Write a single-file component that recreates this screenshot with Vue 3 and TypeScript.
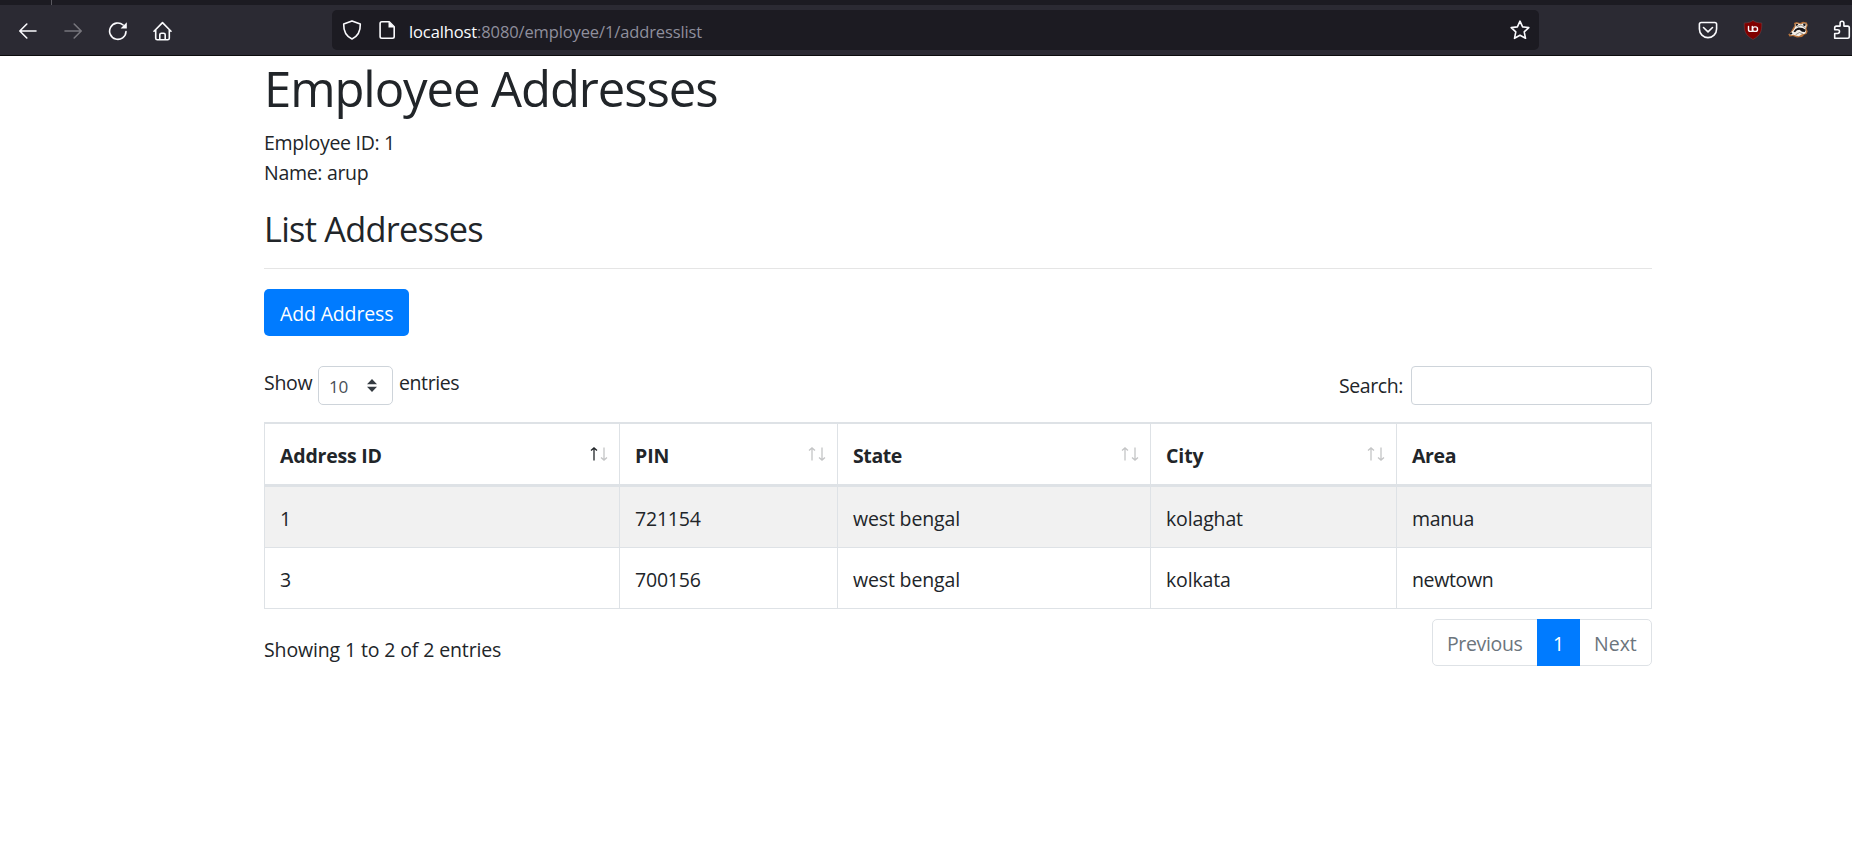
<script setup lang="ts">
interface Column {
  key: keyof Address
  label: string
  sort: 'asc' | 'none' | null
}

interface Address {
  id: number
  pin: string
  state: string
  city: string
  area: string
}

const columns: Column[] = [
  { key: 'id', label: 'Address ID', sort: 'asc' },
  { key: 'pin', label: 'PIN', sort: 'none' },
  { key: 'state', label: 'State', sort: 'none' },
  { key: 'city', label: 'City', sort: 'none' },
  { key: 'area', label: 'Area', sort: null },
]

const rows: Address[] = [
  { id: 1, pin: '721154', state: 'west bengal', city: 'kolaghat', area: 'manua' },
  { id: 3, pin: '700156', state: 'west bengal', city: 'kolkata', area: 'newtown' },
]
</script>

<template>
  <div class="window">
    <div class="tabstrip"><i class="tab-separator"></i></div>
    <header class="toolbar">
      <nav class="nav-buttons">
        <svg viewBox="0 0 20 20"><path d="M18 10H2M8.800 3 1.800 10l7 7" /></svg>
        <svg class="dim" viewBox="0 0 20 20"><path d="M2 10h16M11.200 3l7 7-7 7" /></svg>
        <svg viewBox="0 0 20 20"><path d="M18 10.500A8.200 8.200 0 1 1 15.200 4" /><path class="solid" d="M18.800 1.200v6.200h-6.200z" /></svg>
        <svg viewBox="0 0 20 20"><path d="M1 10.200 9.500 1.600l8.500 8.600M2.700 8.800v8.400q0 1.600 1.600 1.600h10.400q1.600 0 1.600-1.600V8.800M6.800 18.800v-5q0-1.600 1.600-1.600h2.200q1.600 0 1.600 1.600v5" /></svg>
      </nav>
      <div class="urlbar">
        <svg viewBox="0 0 20 20"><path d="M10 .900 18.300 4c.2 6.800-2 12.100-8.300 15C3.700 16.100 1.500 10.800 1.700 4z" /></svg>
        <svg class="page-icon" viewBox="0 0 20 20"><path d="M4.800 1.800h7.400l5 5v9.800q0 1.700-1.700 1.700H4.800q-1.700 0-1.700-1.700V3.500q0-1.700 1.700-1.700z" /><path class="solid" d="M11.500 1.500v6h6z" /></svg>
        <span class="url"><b>localhost</b><span class="path">:8080/employee/1/addresslist</span></span>
        <svg class="star" viewBox="0 0 20 20"><path d="m10 1.200 2.600 5.700 6.200.7-4.600 4.200 1.300 6.500L10 15.200l-5.500 3.100 1.300-6.500L1.200 7.600l6.200-.7z" /></svg>
      </div>
      <div class="extensions">
        <svg viewBox="0 0 20 20"><path d="M3.200 2.500h13.600q1.800 0 1.800 1.800V9a8.600 8.600 0 0 1-17.200 0V4.300q0-1.800 1.800-1.800z" /><path d="m5.500 7.500 4.500 4.300 4.500-4.300" /></svg>
        <svg viewBox="0 0 20 20"><path class="ublock" d="M10 .5C7.600 2.300 4.800 3 1.200 3c0 8.500.8 11.800 8.800 16.500C18 14.800 18.800 11.500 18.800 3 15.200 3 12.400 2.300 10 .5z" /><path class="ublock-mark" d="M5.500 6.500v3q0 1.900 1.900 1.900h1.900V6.500" /><rect class="ublock-mark" x="9.700" y="6.900" width="4.800" height="4.500" rx="2" /></svg>
        <svg viewBox="0 0 20 20">
          <path class="fur" d="M.3 14.200 2.500 12.500 5 8l1.500-2.500L6 3l2.500-1L12 3l3-1.200 3.800.7 1 2.500-1.300 3.500 1.200 3-1.200 2.500-2 .5-2.500 2.500-5 .500-4-1.500-3.500.5z" />
          <path class="fur-white" d="M1.500 14 5.500 10 7.700 6l-.5-2 2.500-.5 3 .7 3-1 2.500.500.3 2-1.200 3 .8 3-1.200 2-3 .5-3 2-3.500-.7-2-.8-2 .5z" />
          <path class="fur-black" d="m1 13.700 2.500-1.500 1 1.300-1.500 1.300zM5.500 11.500l2-2.500 3-1.500 4 .5 3.200 1.700-.7 2.300-3-.2-2.500-2-2.500.5-2 2zM7.500 4.200l2-.5.8 1-2 1.200zM15.200 3.500l2.500.3-.5 2.400-2-.8z" />
          <path class="fur-line" d="M9 6.500l4-1.500 4 2.500M8 14.500l3.500-2 3 1.200" />
        </svg>
        <svg viewBox="0 0 20 20"><path d="M1.700 18.300v-4.800h2.800q2 0 2-1.900t-2-1.900H1.700V7.800q0-1.700 1.700-1.700h3.700V3.300q0-2 1.900-2t1.900 2v2.800h3.700q1.700 0 1.700 1.700v8.800q0 1.700-1.700 1.700z" /></svg>
      </div>
    </header>

    <main class="container">
      <h1>Employee Addresses</h1>
      <p>Employee ID: 1</p>
      <p>Name: arup</p>
      <h3>List Addresses</h3>
      <hr />
      <button class="add" type="button">Add Address</button>

      <div class="controls">
        <div class="length">
          <span class="show">Show</span>
          <span class="select">
            <span class="value">10</span>
            <svg viewBox="0 0 10 13"><path d="M5 0l5 5.200H0zM5 13l5-5.200H0z" /></svg>
          </span>
          <span class="entries">entries</span>
        </div>
        <label class="filter"><span>Search:</span><input type="text" /></label>
      </div>

      <table>
        <colgroup><col v-for="c in columns" :key="c.key" :class="'col-' + c.key" /></colgroup>
        <thead>
          <tr>
            <th v-for="c in columns" :key="c.key">
              <div class="head">
                <span :class="'label-' + c.key">{{ c.label }}</span>
                <svg v-if="c.sort" :class="c.sort" viewBox="0 0 18 14">
                  <path class="up" d="M4 13.500V1M1 3.600 4 .9l3 2.700" />
                  <path class="down" d="M14 .5V13M11 10.400l3 2.700 3-2.700" />
                </svg>
              </div>
            </th>
          </tr>
        </thead>
        <tbody>
          <tr v-for="r in rows" :key="r.id">
            <td v-for="c in columns" :key="c.key" :class="'cell-' + c.key">{{ r[c.key] }}</td>
          </tr>
        </tbody>
      </table>

      <footer class="summary">
        <span class="info">Showing 1 to 2 of 2 entries</span>
        <div class="pagination">
          <span class="prev">Previous</span><span class="active">1</span><span class="next">Next</span>
        </div>
      </footer>
    </main>
  </div>
</template>

<style>
html,
body {
  margin: 0;
  background: #fff;
  overflow: hidden;
}
</style>

<style scoped>
.window {
  height: 867px;
  overflow: hidden;
  background: #fff;
  color: #212529;
  font: 19.5px/30px "Open Sans", "Noto Sans", sans-serif;
}
.window * {
  box-sizing: border-box;
}
.tabstrip {
  height: 5px;
  padding-left: 51px;
  background: #1c1b22;
}
.tab-separator {
  display: block;
  width: 1px;
  height: 5px;
  background: #5a5960;
}
.toolbar {
  display: flex;
  align-items: center;
  height: 51px;
  background: #2b2a33;
  border-bottom: 1px solid #0c0c0d;
}
.toolbar svg {
  flex: none;
  width: 20px;
  height: 20px;
  fill: none;
  stroke: #fbfbfe;
  stroke-width: 1.6;
  stroke-linecap: round;
  stroke-linejoin: round;
}
.toolbar .solid {
  fill: #fbfbfe;
  stroke: none;
}
.toolbar .dim {
  stroke: #77767d;
}
.nav-buttons {
  display: flex;
  gap: 25px;
  width: 332px;
  padding: 1px 0 0 18px;
}
.urlbar {
  display: flex;
  align-items: center;
  width: 1207px;
  height: 40px;
  padding: 0 9px 0 10px;
  border-radius: 5px;
  background: #1c1b22;
}
.page-icon {
  margin-left: 15px;
}
.url {
  flex: 1;
  margin-left: 12px;
  padding-top: 3px;
  font-size: 16.5px;
  letter-spacing: -0.12px;
  color: #8f8f9d;
}
.url b {
  font-weight: 400;
  color: #fbfbfe;
}
.extensions {
  display: flex;
  flex: 1;
  gap: 25px;
  padding-left: 159px;
  overflow: hidden;
}
.toolbar .ublock {
  fill: #800000;
  stroke: #6b4a50;
  stroke-width: 0.5;
}
.toolbar .ublock-mark {
  stroke-width: 1.4;
}
.toolbar .fur {
  fill: #b8733a;
  stroke: none;
}
.toolbar .fur-white {
  fill: #f3efe9;
  stroke: none;
}
.toolbar .fur-black {
  fill: #17161a;
  stroke: none;
}
.toolbar .fur-line {
  stroke: #55524f;
  stroke-width: 0.6;
}

.container {
  width: 1388px;
  margin-left: 264px;
  padding-top: 2px;
}
h1,
h3,
p {
  margin: 0;
  font-weight: 400;
}
h1 {
  margin-bottom: 10px;
  font-size: 49px;
  line-height: 60px;
  letter-spacing: -1.07px;
}
p {
  letter-spacing: -0.3px;
}
h3 {
  margin-top: 20px;
  font-size: 34.3px;
  line-height: 42px;
  letter-spacing: -0.74px;
}
hr {
  height: 1px;
  margin: 18px 0 20px;
  border: 0;
  background: #e5e5e5;
}
.add {
  display: block;
  width: 145px;
  height: 47px;
  padding: 0 0 0 16px;
  border: 0;
  border-radius: 5px;
  background: #007bff;
  color: #fff;
  font: inherit;
  line-height: 49px;
  letter-spacing: -0.15px;
  text-align: left;
}
.controls {
  display: flex;
  justify-content: space-between;
  height: 39px;
  margin: 30px 0 17px;
}
.length {
  display: flex;
}
.show {
  width: 54px;
  padding-top: 2px;
  letter-spacing: -0.3px;
}
.select {
  display: flex;
  align-items: center;
  justify-content: space-between;
  width: 75px;
  height: 39px;
  padding: 0 15px 0 10px;
  border: 1px solid #ced4da;
  border-radius: 5px;
  color: #495057;
  font-size: 17.1px;
}
.value {
  padding-top: 2px;
  letter-spacing: -0.2px;
}
.select svg {
  width: 10px;
  height: 13px;
  fill: #343a40;
}
.entries {
  margin-left: 6px;
  padding-top: 2px;
  letter-spacing: -0.4px;
}
.filter {
  display: flex;
}
.filter span {
  width: 72px;
  padding-top: 5px;
  letter-spacing: -0.4px;
}
.filter input {
  width: 241px;
  height: 39px;
  border: 1px solid #ced4da;
  border-radius: 4px;
  background: #fff;
}

table {
  width: 1388px;
  table-layout: fixed;
  border-collapse: separate;
  border-spacing: 0;
}
.col-id {
  width: 356px;
}
.col-pin {
  width: 218px;
}
.col-state {
  width: 313px;
}
.col-city {
  width: 246px;
}
.col-area {
  width: 255px;
}
th,
td {
  height: 61px;
  padding: 3px 0 0 15px;
  border: 0 solid #dee2e6;
  border-width: 0 1px 1px 0;
  text-align: left;
}
th {
  height: 65px;
  border-width: 2px 1px 3px 0;
}
th:first-child,
td:first-child {
  border-left-width: 1px;
}
td {
  letter-spacing: -0.15px;
}
.cell-pin {
  letter-spacing: -0.2px;
}
.cell-area {
  letter-spacing: -0.35px;
}
.label-id {
  letter-spacing: -0.2px;
}
.label-state,
.label-area {
  letter-spacing: -0.4px;
}
.label-pin,
.label-city {
  letter-spacing: -0.1px;
}
tbody tr:first-child {
  background: #f1f1f1;
}
.head {
  display: flex;
  justify-content: space-between;
}
.head svg {
  width: 18px;
  height: 14px;
  margin: 6px 11px 0 0;
  fill: none;
  stroke: #c4c5c6;
  stroke-width: 1.3;
}
.asc .up {
  stroke: #212529;
}

.summary {
  display: flex;
  justify-content: space-between;
  padding-top: 10px;
}
.info {
  padding-top: 16px;
  letter-spacing: -0.13px;
}
.pagination {
  display: flex;
  width: 220px;
  height: 47px;
  border: 1px solid #dee2e6;
  border-radius: 5px;
  color: #6c757d;
  line-height: 47px;
}
.prev {
  width: 104px;
  padding-left: 14px;
  letter-spacing: -0.36px;
}
.active {
  width: 43px;
  margin: -1px 0;
  background: #007bff;
  color: #fff;
  line-height: 49px;
  text-align: center;
}
.next {
  padding-left: 14px;
}
</style>
